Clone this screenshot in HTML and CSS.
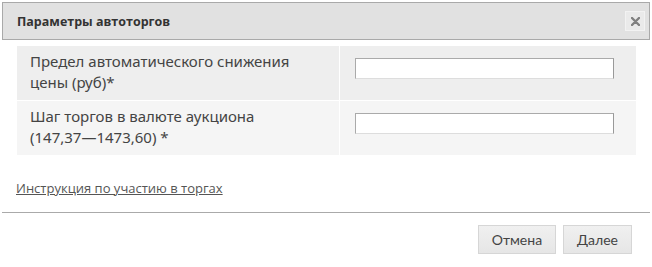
FILE: index.html
```html
<!DOCTYPE html>
<html lang="ru">
<head>
    <meta charset="UTF-8">
    <title>Параметры автоторгов</title>
    <link rel="stylesheet" href="styles.css">
</head>
<body>
    <div class="dialog">
        <div class="dialog-header">
            <span class="dialog-title">Параметры автоторгов</span>
            <button class="close-btn" title="Закрыть">
                <svg width="9" height="9" viewBox="0 0 9 9"><path d="M1 1L8 8M8 1L1 8" stroke="#808080" stroke-width="2.4" stroke-linecap="round"/></svg>
            </button>
        </div>

        <div class="dialog-body">
            <div class="params">
                <div class="param-row odd">
                    <label class="param-label" for="limit">Предел автоматического снижения цены (руб)*</label>
                    <div class="param-field"><input type="text" id="limit" autofocus></div>
                </div>
                <div class="param-row even">
                    <label class="param-label" for="step">Шаг торгов в валюте аукциона <span class="nowrap">(147,37—1473,60) *</span></label>
                    <div class="param-field"><input type="text" id="step"></div>
                </div>
            </div>

            <a href="#" class="help-link">Инструкция по участию в торгах</a>
        </div>

        <div class="dialog-footer">
            <button class="btn">Отмена</button>
            <button class="btn">Далее</button>
        </div>
    </div>
</body>
</html>
```

FILE: styles.css
```css
* {
    margin: 0;
    padding: 0;
    box-sizing: border-box;
}

body {
    background: #fff;
    font-family: 'Open Sans', 'Noto Sans', sans-serif;
    color: #333;
    padding: 2px;
}

.dialog {
    width: 648px;
}

/* Header */
.dialog-header {
    height: 38px;
    background: #e1e1e1;
    border: 1px solid #a9a9a9;
    display: flex;
    align-items: center;
    justify-content: space-between;
    padding: 0 4px 0 14px;
}

.dialog-title {
    font-family: 'Open Sans', sans-serif;
    font-weight: 700;
    font-size: 12.5px;
    color: #333;
}

.close-btn {
    width: 20px;
    height: 20px;
    background: #eaeaea;
    border: 1px solid #f2f2f2;
    display: flex;
    align-items: center;
    justify-content: center;
    cursor: pointer;
}

/* Body */
.dialog-body {
    padding: 6px 0 0 14px;
}

.params {
    width: 619px;
    margin-left: 1px;
}

.param-row {
    display: flex;
    height: 55px;
    border-bottom: 1px solid #fff;
}

.param-row.odd {
    background: #eeeeee;
}

.param-row.even {
    background: #f5f5f5;
}

.param-label {
    width: 323px;
    padding: 5px 40px 0 13px;
    font-family: 'Noto Sans', sans-serif;
    font-size: 15px;
    line-height: 21px;
    color: #444;
    border-right: 1px solid #fff;
}

.nowrap {
    white-space: nowrap;
}

.param-field {
    flex: 1;
    padding: 10px 0 0 15px;
}

.param-field input {
    width: 259px;
    height: 21px;
    border: 1px solid #aaa;
    border-bottom-color: #ddd;
    border-right-color: #999;
    background: #fff;
    padding: 0 8px;
    font-size: 13px;
    outline: none;
    caret-color: #000;
}

.help-link {
    display: inline-block;
    margin-top: 23px;
    font-family: 'Open Sans', sans-serif;
    font-size: 13px;
    color: #555;
    text-decoration: underline;
}

/* Footer */
.dialog-footer {
    border-top: 1px solid #aaa;
    margin-top: 14px;
    display: flex;
    justify-content: flex-end;
    gap: 7px;
    padding: 12px 18px 0 0;
}

.btn {
    height: 29px;
    padding: 0 13px;
    background: linear-gradient(#f0f0f0, #e6e6e6);
    border: 1px solid #d6d6d6;
    font-family: 'Lato', sans-serif;
    font-size: 14px;
    color: #444;
    cursor: pointer;
}
```
